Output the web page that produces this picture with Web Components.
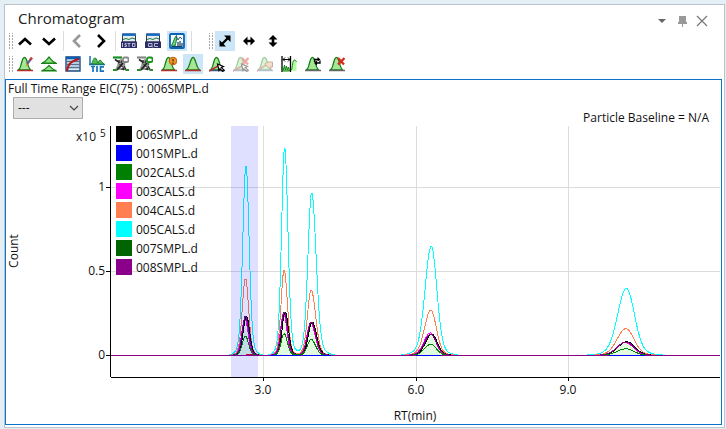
<!DOCTYPE html>
<html lang="en">
<head>
<meta charset="utf-8">
<meta name="viewport" content="width=device-width, initial-scale=1">
<title>Chromatogram</title>
<style>
  body {
    margin: 0;
    background: #e3eef5;
    color: #111;
    font: 12px/16px "Open Sans", "Noto Sans", sans-serif;
  }
</style>
</head>
<body>
<chromatogram-panel heading="Chromatogram">
  <tool-bar slot="tools" label="Navigation">
    <tool-button icon="up" label="Previous row"></tool-button>
    <tool-button icon="down" label="Next row"></tool-button>
    <tool-separator></tool-separator>
    <tool-button icon="left" label="Previous sample" disabled></tool-button>
    <tool-button icon="right" label="Next sample"></tool-button>
    <tool-separator></tool-separator>
    <tool-button icon="istd" label="Show ISTD"></tool-button>
    <tool-button icon="qc" label="Show QC"></tool-button>
    <tool-button icon="overlay" label="Overlay" pressed></tool-button>
    <tool-separator></tool-separator>
  </tool-bar>
  <tool-bar slot="tools" label="Zoom">
    <tool-button icon="zoomBoth" label="Zoom both axes" pressed></tool-button>
    <tool-button icon="zoomX" label="Zoom X"></tool-button>
    <tool-button icon="zoomY" label="Zoom Y"></tool-button>
  </tool-bar>
  <tool-bar slot="peaks" label="Peaks">
    <tool-button icon="peakEdit" label="Edit peak"></tool-button>
    <tool-button icon="peakStack" label="Stack peaks"></tool-button>
    <tool-button icon="table" label="Calibration"></tool-button>
    <tool-button icon="tic" label="TIC"></tool-button>
    <tool-button icon="swapGrey" label="Exclude compound"></tool-button>
    <tool-button icon="swapGreen" label="Include compound"></tool-button>
    <tool-button icon="peakInfo" label="Peak information"></tool-button>
    <tool-button icon="peak" label="Show peaks" pressed></tool-button>
    <tool-button icon="peakPick" label="Pick peak"></tool-button>
    <tool-button icon="peakUnpick" label="Clear picked peak" disabled></tool-button>
    <tool-button icon="peakHand" label="Move baseline" disabled></tool-button>
    <tool-button icon="range" label="Peak range"></tool-button>
    <tool-button icon="peakRedo" label="Reintegrate"></tool-button>
    <tool-button icon="peakDelete" label="Delete peak"></tool-button>
  </tool-bar>
  <chart-view heading="Full Time Range EIC(75) : 006SMPL.d" note="Particle Baseline = N/A"></chart-view>
</chromatogram-panel>

<script>
const peak = (base) => `
  <path d="M1 14C5 13 5 1.5 8 1.5S11 13 15 14Z" fill="#a5e795" stroke="#178017" stroke-width="1.3"/>
  <path d="M0 14.5h16" stroke="${base}" stroke-width="1.5"/>`;
const leftPeak = (base) => `
  <path d="M1 14C5 13 4 1.5 7.500 1.5S10 13 14 14Z" fill="#a5e795" stroke="#178017" stroke-width="1.3"/>
  <path d="M0 14.5h16" stroke="${base}" stroke-width="1.5"/>`;
const cursor = '<path d="M8.5 8l6 2.500-2.200 1 2.700 2.700-1.300 1.300-2.700-2.700-1 1.700z" fill="#fff" stroke="#000" stroke-width="1.2"/>';
const cross = '<path d="M9 2l6 6.500M15.500 2L9 8.500" stroke="#d42a1c" stroke-width="2.3"/>';
const cloud = (a, b) => `
  <path d="M1 14C5 12 4 3 8 3s3 9 7 11Z" fill="#9a9a9a"/>
  <path d="M0 1.5h9" stroke="${a}" stroke-width="2.2"/>
  <path d="M2 3.500l3 2M5 5l6 9M10 7L4 14" stroke="#222" stroke-width="1.7"/>
  <path d="M6 4v2M9 4.500L7 9M5 11l1 2M9 12v2M11 10l2 4" stroke="#333" stroke-width="1.3"/>
  <path d="M6.500 7.500h1M8 11.500h1.500" stroke="#eee" stroke-width="1.5"/>
  <rect x="10" y="1.5" width="5.500" height="4.500" rx="1.500" fill="#fff" stroke="${b}" stroke-width="1.800"/>
  <path d="M11.500 6v3" stroke="${b}" stroke-width="1.5"/>
  <path d="M0 14h4M12.500 14H16" stroke="#2e8b2e" stroke-width="2"/>`;
const monitor = (letters) => `
  <path d="M1.5 1h13v8h-13z" fill="#e4eeee" stroke="#2a3c4c"/>
  <path d="M1 1.700h14" stroke="#1467c2" stroke-width="2.4"/>
  <path d="M2 6.500l3-1 3 1 3-1.500 3 1" fill="none" stroke="#27734b"/>
  <path d="M0 8.500h16V15H0z" fill="#2c2c66"/>
  <path d="${letters}" fill="none" stroke="#b9b9d8"/>`;

const ICONS = {
  up: '<path d="M2 11.5l6-5.500 6 5.500" fill="none" stroke="#000" stroke-width="2.6"/>',
  down: '<path d="M2 5.500L8 11l6-5.500" fill="none" stroke="#000" stroke-width="2.6"/>',
  left: '<path d="M11 2L5 8l6 6" fill="none" stroke="#000" stroke-width="2.6"/>',
  right: '<path d="M5 2l6 6-6 6" fill="none" stroke="#000" stroke-width="2.6"/>',
  istd: monitor('M1.5 10v4M5.5 10.5H4v1.5h1.500v1.500H3.500M6.5 10.5h3M8 10v4M11.500 10v3.500h2.500v-3h-2.500'),
  qc: monitor('M3.500 10.500h3.500v3H3.500zM6 12.500l2 2M13 10.500H9.500v3H13'),
  overlay: `
    <rect x="1" y="1" width="14" height="14" rx="1" fill="#f4fbfa" stroke="#0b63b5" stroke-width="1.8"/>
    <path d="M2 13C4 11 5 5 7.500 2.500c1 3-1 8-1.500 10.500z" fill="#6fcf74" stroke="#168348"/>
    <path d="M2.500 13.500h11M9 13V9M11 13V8M13 13v-3" fill="none" stroke="#153e64" stroke-width="1.2"/>
    <path d="M7 3l2 4 2-3 2 2" fill="none" stroke="#35597a"/>`,
  zoomBoth: `
    <path d="M5 11l6-6" stroke="#000" stroke-width="2.4"/>
    <path d="M7 2.500h6.500V9zM2.500 7v6.500H9z" fill="#000"/>`,
  zoomX: '<path d="M2 8l4.500-4.500v3.200h3V3.500L14 8l-4.500 4.500V9.300h-3v3.200z" fill="#000"/>',
  zoomY: '<path d="M8 2l4.500 4.500H9.300v3h3.200L8 14l-4.500-4.500h3.200v-3H3.500z" fill="#000"/>',
  peakEdit: `${leftPeak('#b4302c')}
    <path d="M10 8l4-5" stroke="#76528e" stroke-width="2.2"/>
    <path d="M13.500 3.500L15 1.700" stroke="#c23f32" stroke-width="2.6"/>
    <path d="M8.500 10.500l1-3 1.500 1.500z" fill="#e09a2c"/>`,
  peakStack: `
    <path d="M1 7C5 6 6 3 8 1c2 2 3 5 7 6ZM1 14.500c4-1 5-3 7-5 2 2 3 4 7 5Z" fill="#8ddf83" stroke="#178017" stroke-width="1.2"/>
    <path d="M0 7.500h16M0 15h16" stroke="#178017"/>`,
  table: `
    <path d="M1 1h14v14H1z" fill="#dce9f7" stroke="#1e4d83" stroke-width="1.4"/>
    <path d="M1 2h14" stroke="#0f5db0" stroke-width="2.6"/>
    <path d="M1 5.500h14M1 8.500h14M1 11.500h14" stroke="#56718f" stroke-width="1.4"/>
    <path d="M2 15C3 8 6 5 14 3" fill="none" stroke="#b5171b" stroke-width="2"/>`,
  tic: `
    <path d="M1 0v9M0 8.500h16" stroke="#1474ba" stroke-width="1.5"/>
    <path d="M2 8C4 7 4 2 6 2s2 4 3 5c1-1 1-3 2-3s2 3 4 4z" fill="#54bd59" stroke="#187b22"/>
    <path d="M2 10.500h4M4 10v6M8 10v6M15 10.800h-3.500v4.400H15" fill="none" stroke="#1474ba" stroke-width="1.7"/>`,
  swapGrey: cloud('#1a8f24', '#888'),
  swapGreen: cloud('#888', '#18941f'),
  peakInfo: `${leftPeak('#b4302c')}
    <circle cx="12" cy="5" r="3.8" fill="#f0912b" stroke="#b85d11"/>
    <path d="M12 3v2.500M12 6.500V8" stroke="#5d2600" stroke-width="1.2"/>`,
  peak: peak('#b4302c'),
  peakPick: `${leftPeak('#3c5a88')}<path d="M0 15l9-5" stroke="#b4302c" stroke-width="1.5"/>${cursor}`,
  peakUnpick: `${leftPeak('#3c5a88')}<path d="M0 15l9-5" stroke="#b4302c" stroke-width="1.5"/>${cross}${cursor}`,
  peakHand: `${leftPeak('#3c6a98')}
    <path d="M0 15l9-6" stroke="#b4302c" stroke-width="1.5"/>
    <path d="M8 7.500l3-1.500h4.500v5H13l1.500 3L9 9.500z" fill="#e7ad76" stroke="#774218"/>`,
  range: `
    <path d="M1 0v16M9.5 0v16" stroke="#000" stroke-width="1.3"/>
    <path d="M2 3.500h7M4 1.500l-2 2 2 2M7 1.500l2 2-2 2" fill="none" stroke="#000"/>
    <path d="M1.5 15v-4l1 3 1-5 1 5 1-4 1 4 1-3 1 4z" fill="#82d879" stroke="#178017"/>
    <path d="M10.5 15c1-3 1-11 3-11s1.500 1 2 2v9z" fill="#b6ff9d"/>
    <path d="M10.5 14c1-3 1-10 3-10 1 0 1.500 1 2 2" fill="none" stroke="#178017"/>`,
  peakRedo: `${leftPeak('#666')}
    <path d="M9.500 6V3.500H13M15 4.500V7h-3.500" fill="none" stroke="#000" stroke-width="1.3"/>
    <path d="M12.500 1L15.500 3.500l-3 2zM12 4.500L9 7l3 2.500z" fill="#000"/>`,
  peakDelete: `${leftPeak('#666')}${cross}`
};

const TRACES = [
  { name: '006SMPL.d', color: '#000000' },
  { name: '001SMPL.d', color: '#0000ff' },
  { name: '002CALS.d', color: '#008000' },
  { name: '003CALS.d', color: '#ff00ff' },
  { name: '004CALS.d', color: '#ff7f50' },
  { name: '005CALS.d', color: '#00ffff' },
  { name: '007SMPL.d', color: '#006400' },
  { name: '008SMPL.d', color: '#8b008b' }
];

// retention time, left and right spread (minutes)
const PEAKS = [
  { rt: 2.67, l: 0.06, r: 0.06 },
  { rt: 3.43, l: 0.058, r: 0.062 },
  { rt: 3.96, l: 0.07, r: 0.085 },
  { rt: 6.31, l: 0.118, r: 0.105 },
  { rt: 10.14, l: 0.165, r: 0.155 }
];

// peak heights in 1e5 counts, drawn in this order
const CURVES = [
  { color: '#00ffff', heights: [1.13, 1.24, 0.97, 0.65, 0.4], shift: 0 },
  { color: '#ff7f50', heights: [0.46, 0.51, 0.39, 0.27, 0.16], shift: -0.01 },
  { color: '#ff00ff', heights: [0.22, 0.25, 0.195, 0.135, 0.077], shift: -0.02 },
  { color: '#000000', heights: [0.235, 0.26, 0.2, 0.128, 0.082], shift: 0.01, fill: '#e0fbe0' },
  { color: '#8b008b', heights: [0.235, 0.26, 0.2, 0.128, 0.08], shift: -0.01 },
  { color: '#008000', heights: [0.115, 0.13, 0.096, 0.067, 0.04], shift: -0.01 }
];

class ToolButton extends HTMLElement {
  constructor() {
    super();
    this.shadowDOM = this.attachShadow({ mode: 'open' });
  }

  connectedCallback() {
    this.render();
  }

  render() {
    const pressed = this.hasAttribute('pressed');
    this.shadowDOM.innerHTML = `
      <style>
        :host {
          display: block;
          margin: 0 2px;
        }

        button {
          display: grid;
          place-items: center;
          width: 20px;
          height: 20px;
          padding: 0;
          border: 0;
          background: transparent;
        }

        button[aria-pressed="true"] {
          background: #cce6f8;
        }

        button:disabled svg {
          opacity: 0.4;
        }
      </style>
      <button type="button" aria-label="${this.getAttribute('label')}" aria-pressed="${pressed}"
        ${this.hasAttribute('disabled') ? 'disabled' : ''}>
        <svg width="16" height="16" viewBox="0 0 16 16" aria-hidden="true">${ICONS[this.getAttribute('icon')]}</svg>
      </button>
    `;
  }
}

class ToolSeparator extends HTMLElement {
  constructor() {
    super();
    this.shadowDOM = this.attachShadow({ mode: 'open' });
    this.shadowDOM.innerHTML = `
      <style>
        :host {
          display: flex;
          justify-content: center;
          width: 4px;
          height: 20px;
        }

        span {
          width: 1px;
          background: #dcdcdc;
        }
      </style>
      <span></span>
    `;
  }
}

class ToolBar extends HTMLElement {
  constructor() {
    super();
    this.shadowDOM = this.attachShadow({ mode: 'open' });
  }

  connectedCallback() {
    this.shadowDOM.innerHTML = `
      <style>
        :host {
          display: block;
        }

        div {
          display: flex;
          align-items: center;
        }

        .grip {
          width: 6px;
          height: 16px;
          background: conic-gradient(transparent 270deg, #a8a8a8 0) -1px -1px / 3px 3px;
        }
      </style>
      <div role="toolbar" aria-label="${this.getAttribute('label')}">
        <span class="grip"></span>
        <slot></slot>
      </div>
    `;
  }
}

class ChartLegend extends HTMLElement {
  constructor() {
    super();
    this.shadowDOM = this.attachShadow({ mode: 'open' });
  }

  connectedCallback() {
    this.shadowDOM.innerHTML = `
      <style>
        :host {
          display: block;
        }

        ul {
          display: grid;
          gap: 3px;
          margin: 0;
          padding: 0;
          list-style: none;
        }

        li {
          display: flex;
          gap: 4px;
        }

        i {
          width: 16px;
          height: 16px;
        }

        span {
          padding-top: 1px;
          line-height: 15px;
        }
      </style>
      <ul>
        ${TRACES.map((t) => `<li><i style="background:${t.color}"></i><span>${t.name}</span></li>`).join('')}
      </ul>
    `;
  }
}

class ChartPlot extends HTMLElement {
  constructor() {
    super();
    this.shadowDOM = this.attachShadow({ mode: 'open' });
    this.shadowDOM.innerHTML = `
      <style>
        :host {
          display: block;
          position: relative;
          min-height: 200px;
        }

        svg {
          position: absolute;
          width: 100%;
          height: 100%;
        }

        text {
          font-size: 12px;
          fill: #111;
        }

        .sup {
          font-size: 10px;
        }

        .lines {
          fill: none;
          shape-rendering: crispEdges;
        }

        chart-legend {
          position: absolute;
          left: 110px;
          top: 0;
        }
      </style>
      <svg role="img" aria-label="Count against retention time"></svg>
      <chart-legend></chart-legend>
    `;
  }

  connectedCallback() {
    this.draw();
    this.observer = new ResizeObserver(() => this.draw());
    this.observer.observe(this);
  }

  disconnectedCallback() {
    this.observer.disconnect();
  }

  signal(curve, t) {
    return PEAKS.reduce((sum, p, i) => {
      const d = t - p.rt - curve.shift;
      const z = d / (d < 0 ? p.l : p.r);
      return sum + curve.heights[i] * (0.92 * Math.exp(-z * z / 2) + 0.08 * Math.exp(-z * z / 9));
    }, 0);
  }

  draw() {
    const width = this.clientWidth;
    const height = this.clientHeight;
    const left = 104;
    const right = width - 1;
    const bottom = height - 47;
    const x = (t) => left + t / 11.98 * (right - left);
    const y = (v) => (1.366 - v) / 1.494 * bottom;
    const px = (n) => Math.round(n) + 0.5;
    const ticksX = [3, 6, 9];
    const ticksY = [0, 0.5, 1];
    const zero = px(y(0));

    const curvePath = (curve) => {
      const points = [];
      for (let i = left + 1; i <= right; i++) {
        const t = (i - left) / (right - left) * 11.98;
        points.push(`${i} ${(zero - this.signal(curve, t) * bottom / 1.494).toFixed(2)}`);
      }
      return 'M' + points.join('L');
    };

    const blue = [[3.15, 3.75], [3.8, 4.35], [6.0, 6.5], [9.8, 10.5]]
      .map(([a, b]) => `M${x(a)} ${zero}H${x(b)}`).join('');

    this.shadowDOM.querySelector('svg').innerHTML = `
      <g class="lines">
        <path stroke="#dcdcdc" d="${ticksX.map((t) => `M${px(x(t))} 0V${bottom}`).join('')}
          ${ticksY.slice(1).map((v) => `M${left} ${px(y(v))}H${right}`).join('')}"/>
        ${CURVES.filter((c) => c.fill).map((c) => `<path fill="${c.fill}" d="${curvePath(c)}V${zero}H${left}Z"/>`).join('')}
        ${CURVES.map((c) => `<path stroke="${c.color}" d="${curvePath(c)}"/>`).join('')}
        <path stroke="#8b008b" d="M${left} ${zero}H${right}"/>
        <path stroke="#0000ff" d="${blue}"/>
        <path stroke="#e00020" d="M${x(2.68)} ${zero - 1}H${x(2.8)}"/>
        <rect x="${Math.round(x(2.385))}" y="0" width="${Math.round(x(0.53) - left)}" height="${bottom}" fill="#0000ff" fill-opacity="0.125"/>
        <path stroke="#000" d="M${left + 0.5} 0V${bottom}M${left + 1} ${bottom + 0.5}H${right}
          ${ticksX.map((t) => `M${px(x(t))} ${bottom}v4`).join('')}
          ${ticksY.map((v) => `M${left - 4} ${px(y(v))}h4`).join('')}"/>
      </g>
      <text x="70" y="15">x10</text>
      <text class="sup" x="94" y="11">5</text>
      ${ticksY.map((v) => `<text x="${left - 5}" y="${Math.round(y(v)) + 4}" text-anchor="end">${v}</text>`).join('')}
      ${ticksX.map((t) => `<text x="${Math.round(x(t))}" y="${bottom + 17}" text-anchor="middle">${t.toFixed(1)}</text>`).join('')}
      <text x="${Math.round((left + right) / 2)}" y="${bottom + 43}" text-anchor="middle">RT(min)</text>
      <text transform="translate(12 ${Math.round(bottom / 2) - 1}) rotate(-90)" text-anchor="middle">Count</text>
    `;
  }
}

class ChartView extends HTMLElement {
  constructor() {
    super();
    this.shadowDOM = this.attachShadow({ mode: 'open' });
  }

  connectedCallback() {
    this.shadowDOM.innerHTML = `
      <style>
        :host {
          display: flex;
          flex-direction: column;
          border: 1px solid #0a74cc;
          background: #fff;
        }

        h2 {
          margin: 0;
          padding: 1px 2px 0;
          font-size: 12px;
          font-weight: 400;
          line-height: 16px;
        }

        .controls {
          display: flex;
          justify-content: space-between;
          height: 29px;
          padding: 0 12px 0 7px;
        }

        .controls span {
          align-self: flex-end;
        }

        .picker {
          display: grid;
          align-items: center;
          align-self: flex-start;
        }

        .picker > * {
          grid-area: 1 / 1;
        }

        .picker svg {
          justify-self: end;
          margin-right: 3px;
          pointer-events: none;
        }

        select {
          appearance: none;
          width: 70px;
          height: 22px;
          padding: 0 4px;
          border: 1px solid #adadad;
          border-radius: 0;
          background: #e1e1e1;
          color: inherit;
          font: inherit;
        }

        chart-plot {
          flex: 1;
        }
      </style>
      <h2>${this.getAttribute('heading')}</h2>
      <div class="controls">
        <div class="picker">
          <select aria-label="Signal"><option>---</option></select>
          <svg width="12" height="12" viewBox="0 0 12 12" aria-hidden="true"><path d="M2 4l4 4 4-4" fill="none" stroke="#444" stroke-width="1.2"/></svg>
        </div>
        <span>${this.getAttribute('note')}</span>
      </div>
      <chart-plot></chart-plot>
    `;
  }
}

class ChromatogramPanel extends HTMLElement {
  constructor() {
    super();
    this.shadowDOM = this.attachShadow({ mode: 'open' });
  }

  connectedCallback() {
    this.shadowDOM.innerHTML = `
      <style>
        :host {
          display: flex;
          box-sizing: border-box;
          min-height: 100vh;
          padding: 4px 1px 1px 4px;
        }

        section {
          display: flex;
          flex: 1;
          flex-direction: column;
          border: 1px solid #b9c5ca;
          background: #fff;
        }

        header {
          display: flex;
          align-items: flex-end;
          justify-content: space-between;
          height: 26px;
          padding: 0 12px 0 13px;
        }

        h1 {
          margin: 0;
          color: #222;
          font-size: 15px;
          font-weight: 400;
          line-height: 26px;
        }

        nav {
          display: flex;
        }

        nav button {
          display: grid;
          place-items: center;
          width: 20px;
          height: 21px;
          padding: 0;
          border: 0;
          background: transparent;
        }

        .row {
          display: flex;
          gap: 14px;
          padding: 0 2px 3px;
        }

        .row.last {
          padding-bottom: 5px;
        }

        ::slotted(chart-view) {
          flex: 1;
          margin: 0 2px 2px 0;
        }
      </style>
      <section>
        <header>
          <h1>${this.getAttribute('heading')}</h1>
          <nav aria-label="Window">
            <button type="button" aria-label="Options"><svg width="12" height="12"><path d="M2 4h8L6 8z" fill="#666"/></svg></button>
            <button type="button" aria-label="Pin"><svg width="12" height="12"><path d="M3 1h7v6h1v2H7v3H6V9H2V7h1z" fill="#999"/></svg></button>
            <button type="button" aria-label="Close"><svg width="12" height="12"><path d="M1 1l10 10M11 1L1 11" stroke="#777" stroke-width="1.2"/></svg></button>
          </nav>
        </header>
        <div class="row"><slot name="tools"></slot></div>
        <div class="row last"><slot name="peaks"></slot></div>
        <slot></slot>
      </section>
    `;
  }
}

customElements.define('tool-button', ToolButton);
customElements.define('tool-separator', ToolSeparator);
customElements.define('tool-bar', ToolBar);
customElements.define('chart-legend', ChartLegend);
customElements.define('chart-plot', ChartPlot);
customElements.define('chart-view', ChartView);
customElements.define('chromatogram-panel', ChromatogramPanel);
</script>
</body>
</html>
